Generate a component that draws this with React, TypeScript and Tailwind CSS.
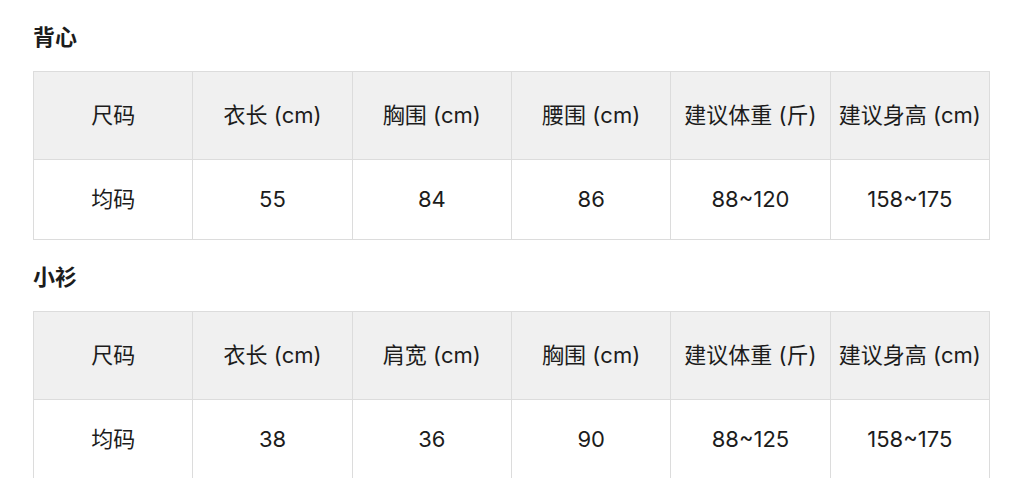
import React from "react";

const font = { fontFamily: 'Inter, "Noto Sans CJK SC", sans-serif' };

function SizeTable({ headers, values }: { headers: string[]; values: string[] }) {
  return (
    <table className="w-[957px] table-fixed border-collapse text-[22px] text-[#1c1c1c]">
      <thead>
        <tr className="h-[88px] bg-[#f0f0f0]">
          {headers.map((h, i) => (
            <th key={i} className="border border-[#dcdcdc] font-normal text-center p-0 whitespace-nowrap">
              {h}
            </th>
          ))}
        </tr>
      </thead>
      <tbody>
        <tr className="h-[80px] bg-white">
          {values.map((v, i) => (
            <td key={i} className="border border-[#dcdcdc] text-center p-0">
              {v}
            </td>
          ))}
        </tr>
      </tbody>
    </table>
  );
}

export default function App() {
  return (
    <div className="w-[1024px] h-[478px] overflow-hidden bg-white pl-[33px] pt-[26px]" style={font}>
      <h2 className="text-[22px] leading-[22px] font-semibold text-[#1c1c1c] mb-[23px]">背心</h2>
      <SizeTable
        headers={["尺码", "衣长 (cm)", "胸围 (cm)", "腰围 (cm)", "建议体重 (斤)", "建议身高 (cm)"]}
        values={["均码", "55", "84", "86", "88~120", "158~175"]}
      />
      <h2 className="text-[22px] leading-[22px] font-semibold text-[#1c1c1c] mt-[26px] mb-[23px]">小衫</h2>
      <SizeTable
        headers={["尺码", "衣长 (cm)", "肩宽 (cm)", "胸围 (cm)", "建议体重 (斤)", "建议身高 (cm)"]}
        values={["均码", "38", "36", "90", "88~125", "158~175"]}
      />
    </div>
  );
}
